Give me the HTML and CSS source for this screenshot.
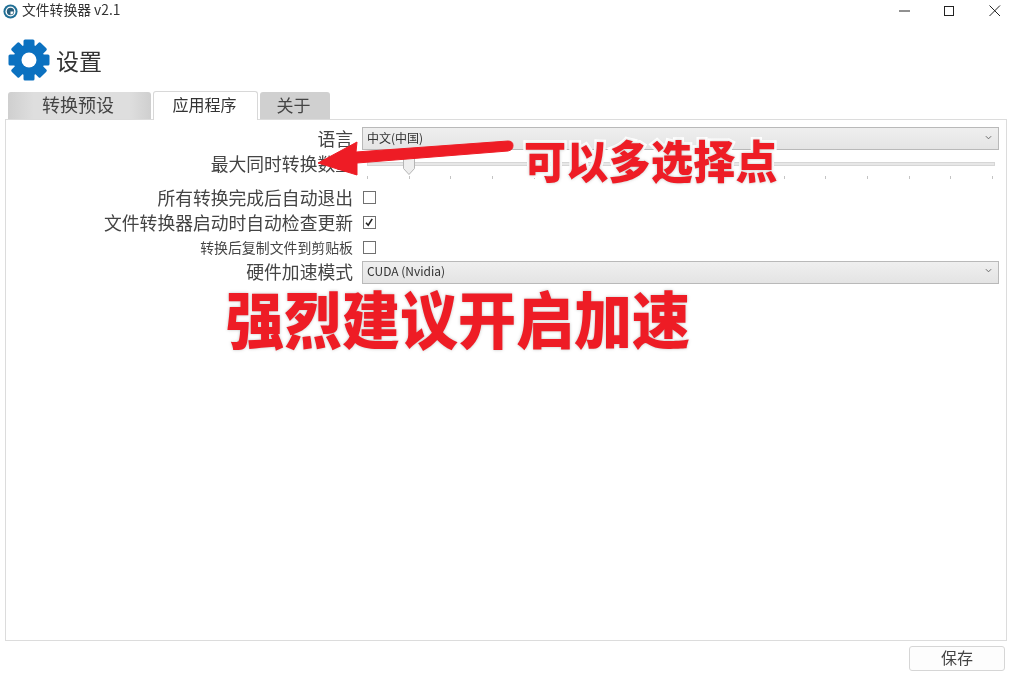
FILE: index.html
```html
<!DOCTYPE html>
<html lang="zh-CN">
<head>
<meta charset="utf-8">
<title>文件转换器 v2.1</title>
<link rel="stylesheet" href="styles.css">
</head>
<body>
<div class="window">
  <header class="titlebar">
    <div class="title">
      <svg class="app-icon" viewBox="0 0 16 16" aria-hidden="true">
        <circle cx="8" cy="8" r="7.5" fill="#1f6f96"/>
        <circle cx="8" cy="8" r="5.4" fill="#fff"/>
        <circle cx="8" cy="8" r="3.9" fill="#2a5f7c"/>
        <path d="M8 8h3.2a3.2 3.2 0 0 1-3.2 3.2z" fill="#fff"/>
      </svg>
      <span>文件转换器 v2.1</span>
    </div>
    <div class="win-controls">
      <svg class="win-btn" viewBox="0 0 12 12" aria-hidden="true"><path d="M0 6h11" stroke="#222" stroke-width="1"/></svg>
      <svg class="win-btn" viewBox="0 0 12 12" aria-hidden="true"><rect x="0.5" y="1.5" width="9" height="9" fill="none" stroke="#222" stroke-width="1"/></svg>
      <svg class="win-btn" viewBox="0 0 12 12" aria-hidden="true"><path d="M0.5 0.5l10.5 10.5M11 0.5L0.5 11" stroke="#222" stroke-width="1"/></svg>
    </div>
  </header>

  <div class="heading">
    <svg class="gear" viewBox="0 0 42 42" aria-hidden="true">
      <g fill="#0b71c0">
        <circle cx="21" cy="21" r="15.5"/>
        <rect x="15.5" y="0.5" width="11" height="41" rx="1.5"/>
        <rect x="15.5" y="0.5" width="11" height="41" rx="1.5" transform="rotate(45 21 21)"/>
        <rect x="15.5" y="0.5" width="11" height="41" rx="1.5" transform="rotate(90 21 21)"/>
        <rect x="15.5" y="0.5" width="11" height="41" rx="1.5" transform="rotate(135 21 21)"/>
      </g>
      <circle cx="21" cy="21" r="7.5" fill="#fff"/>
    </svg>
    <h1>设置</h1>
  </div>

  <nav class="tabs">
    <div class="tab tab-presets">转换预设</div>
    <div class="tab tab-active">应用程序</div>
    <div class="tab tab-about">关于</div>
  </nav>

  <main class="panel">
    <div class="form">
      <label class="label">语言</label>
      <div class="select"><span>中文(中国)</span><svg class="chevron" viewBox="0 0 8 5" aria-hidden="true"><path d="M1 1l3 3 3-3" fill="none" stroke="#666" stroke-width="1.1"/></svg></div>

      <label class="label label-slider">最大同时转换数量</label>
      <div class="slider">
        <div class="track"></div>
        <svg class="thumb" viewBox="0 0 12 19" aria-hidden="true"><path d="M0.5 1.5Q0.5 0.5 1.5 0.5H10.5Q11.5 0.5 11.5 1.5V12.5L6 18.5L0.5 12.5Z" fill="#eee" stroke="#b5b5b5"/></svg>
        <div class="ticks">
          <i></i><i></i><i></i><i></i><i></i><i></i><i></i><i></i><i></i><i></i><i></i><i></i><i></i><i></i><i></i><i></i>
        </div>
      </div>

      <label class="label">所有转换完成后自动退出</label>
      <div class="check-cell"><span class="checkbox"></span></div>

      <label class="label">文件转换器启动时自动检查更新</label>
      <div class="check-cell"><span class="checkbox"><svg viewBox="0 0 12 12" aria-hidden="true"><path d="M2.2 6.2l2.4 2.8 4.4-7" fill="none" stroke="#222" stroke-width="1.7"/></svg></span></div>

      <label class="label label-small">转换后复制文件到剪贴板</label>
      <div class="check-cell"><span class="checkbox"></span></div>

      <label class="label">硬件加速模式</label>
      <div class="select"><span>CUDA (Nvidia)</span><svg class="chevron" viewBox="0 0 8 5" aria-hidden="true"><path d="M1 1l3 3 3-3" fill="none" stroke="#666" stroke-width="1.1"/></svg></div>
    </div>
  </main>

  <footer class="footer">
    <button class="save">保存</button>
  </footer>

  <svg class="note-arrow" viewBox="0 0 210 50" aria-hidden="true">
    <path d="M2 25 L41 4 L40 14 L192 3 Q197 3 197 7.5 Q197 12 192 13 L41 25 L41 37 Z" fill="#ee1c25" stroke="#ee1c25" stroke-width="1" stroke-linejoin="round"/>
  </svg>
  <div class="note note-small">可以多选择点</div>
  <div class="note note-large">强烈建议开启加速</div>
</div>
</body>
</html>
```
FILE: styles.css
```css
* { box-sizing: border-box; }
html, body { margin: 0; padding: 0; }
body {
  background: #fff;
  color: #333;
  font-family: "Noto Sans CJK SC", "Noto Sans", sans-serif;
}
.window {
  position: relative;
  width: 1016px;
  height: 680px;
  overflow: hidden;
  display: flex;
  flex-direction: column;
  filter: blur(0.4px);
}
.titlebar {
  height: 18px;
  display: flex;
  justify-content: space-between;
  align-items: flex-start;
  padding-left: 3px;
  padding-right: 15px;
}
.title {
  display: flex;
  align-items: flex-start;
  gap: 4px;
  font-size: 13.8px;
  line-height: 18px;
  color: #333;
}
.app-icon { width: 15px; height: 15px; margin-top: 4px; }
.win-controls { display: flex; gap: 33px; padding-top: 5px; }
.win-btn { width: 12px; height: 12px; display: block; }

.heading {
  height: 73px;
  padding: 21px 0 0 8px;
  display: flex;
  align-items: flex-start;
  gap: 6px;
}
.gear { width: 42px; height: 42px; flex: none; }
.heading h1 {
  margin: 4px 0 0;
  font-size: 23px;
  line-height: 34px;
  font-weight: 400;
  color: #333;
}

.tabs {
  height: 28px;
  padding-left: 8px;
  display: flex;
  align-items: flex-end;
  gap: 2px;
  position: relative;
  z-index: 1;
}
.tab {
  height: 27px;
  padding: 0 3px 3px 0;
  display: flex;
  align-items: center;
  justify-content: center;
  background: #d0d0d0;
  border-radius: 3px 3px 0 0;
  font-size: 17px;
  color: #444;
}
.tab-presets {
  width: 143px;
  font-size: 18px;
  background: linear-gradient(90deg, #cfcfcf, #dedede 18%, #dedede 85%, #cfcfcf);
}
.tab-active {
  width: 105px;
  height: 29px;
  margin-bottom: -1px;
  padding: 0 2px 4px 0;
  background: #fff;
  border: 1px solid #d8d8d8;
  border-bottom: 0;
  font-size: 16px;
  color: #333;
}
.tab-about { width: 70px; }

.panel {
  margin-left: 5px;
  width: 1002px;
  height: 522px;
  border: 1px solid #dcdcdc;
  padding-top: 7px;
}
.form {
  display: grid;
  grid-template-columns: 347px 637px;
  grid-template-rows: 23px 35px 25px 25px 25px 24px;
  column-gap: 9px;
  align-items: center;
}
.label {
  justify-self: end;
  padding-bottom: 2px;
  font-size: 17.8px;
  line-height: 24px;
  color: #444;
  white-space: nowrap;
}
.label-small { font-size: 13.9px; }
.label-slider { align-self: start; margin-top: 1px; }
.select {
  height: 23px;
  display: flex;
  justify-content: space-between;
  align-items: center;
  padding: 0 6px 3px 4px;
  background: linear-gradient(#efefef, #e4e4e4);
  border: 1px solid #b9b9b9;
  font-size: 12px;
  color: #333;
}
.chevron { width: 7px; height: 5px; }
.slider {
  position: relative;
  align-self: start;
  height: 30px;
  margin-left: 5px;
  width: 628px;
}
.track {
  position: absolute;
  left: 0;
  right: 0;
  top: 12px;
  height: 4px;
  background: #e7e7e7;
  border: 1px solid #d6d6d6;
}
.thumb {
  position: absolute;
  left: 36px;
  top: 6px;
  width: 12px;
  height: 19px;
}
.ticks {
  position: absolute;
  left: 0;
  right: 2px;
  top: 26px;
  display: flex;
  justify-content: space-between;
}
.ticks i { width: 1px; height: 3px; background: #c4c4c4; display: block; }
.check-cell { display: flex; align-items: center; padding-left: 1px; }
.checkbox {
  width: 13px;
  height: 13px;
  background: #fff;
  border: 1px solid #707070;
  display: block;
}
.checkbox svg { width: 11px; height: 11px; display: block; }

.footer {
  flex: 1;
  display: flex;
  justify-content: flex-end;
  padding: 5px 11px 0 0;
  align-items: flex-start;
}
.save {
  width: 96px;
  height: 25px;
  padding: 0 0 3px;
  background: #fdfdfd;
  border: 1px solid #d6d6d6;
  border-radius: 3px;
  font-family: inherit;
  font-size: 16px;
  line-height: 20px;
  color: #444;
}

/* Annotations drawn over the screenshot */
.note-arrow {
  position: absolute;
  left: 316px;
  top: 138px;
  width: 210px;
  height: 50px;
}
.note {
  position: absolute;
  color: #ee1c25;
  font-weight: 900;
  white-space: nowrap;
  -webkit-text-stroke: 5px #fff;
  paint-order: stroke fill;
  text-shadow: 0 0 3px rgba(0,0,0,.25);
}
.note-small {
  left: 524px;
  top: 130px;
  font-size: 42px;
  line-height: 60px;
  letter-spacing: 0.3px;
  transform: scaleY(1.08);
}
.note-large {
  left: 226px;
  top: 275px;
  font-size: 58px;
  line-height: 84px;
  transform: scaleY(1.07);
}
```
